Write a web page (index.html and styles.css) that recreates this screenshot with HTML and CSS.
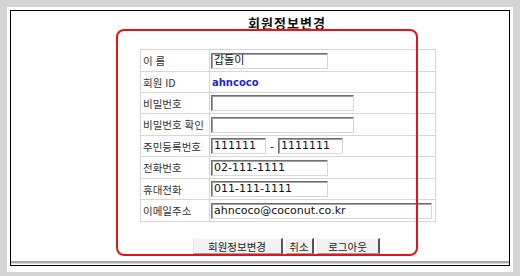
FILE: index.html
```html
<!DOCTYPE html>
<html lang="ko">
<head>
<meta charset="utf-8">
<title>회원정보변경</title>
<link rel="stylesheet" href="styles.css">
</head>
<body>
<div class="sheet">
  <div class="panel">
    <div class="content">
      <h1 class="title">회원정보변경</h1>
      <div class="form-grid">
        <div class="label">이 름</div>
        <div class="value"><span class="field w-name">갑돌이</span></div>
        <div class="label">회원 ID</div>
        <div class="value"><span class="userid">ahncoco</span></div>
        <div class="label">비밀번호</div>
        <div class="value"><span class="field w-pass"></span></div>
        <div class="label">비밀번호 확인</div>
        <div class="value"><span class="field w-pass"></span></div>
        <div class="label">주민등록번호</div>
        <div class="value"><span class="field w-jumin1">111111</span><span class="dash">-</span><span class="field w-jumin2">1111111</span></div>
        <div class="label">전화번호</div>
        <div class="value"><span class="field w-name">02-111-1111</span></div>
        <div class="label">휴대전화</div>
        <div class="value"><span class="field w-name">011-111-1111</span></div>
        <div class="label">이메일주소</div>
        <div class="value"><span class="field w-mail">ahncoco@coconut.co.kr</span></div>
      </div>
      <div class="actions">
        <span class="btn w-b1">회원정보변경</span>
        <span class="btn w-b2">취소</span>
        <span class="btn w-b3">로그아웃</span>
      </div>
    </div>
    <div class="rule"></div>
    <div class="highlight"></div>
  </div>
</div>
</body>
</html>
```
FILE: styles.css
```css
html, body {
  margin: 0;
  padding: 0;
}
body {
  background: #d4d4d4;
  width: 520px;
  height: 276px;
  overflow: hidden;
  font-family: "Noto Sans CJK KR", "DejaVu Sans", sans-serif;
}
.sheet {
  box-sizing: border-box;
  margin: 7px 0 0 7px;
  width: 506px;
  height: 265px;
  padding: 3px 3px 6px 3px;
  background: #ffffff;
}
.panel {
  position: relative;
  box-sizing: border-box;
  width: 500px;
  height: 256px;
  border: 1px solid #000;
  background: #fff;
  display: flex;
  flex-direction: column;
}
.content {
  flex: 1;
  margin-left: 129px;
  width: 296px;
  padding-top: 4px;
  display: flex;
  flex-direction: column;
}
.title {
  margin: 0;
  font-size: 13px;
  line-height: 16px;
  font-weight: bold;
  letter-spacing: 1px;
  color: #111;
  text-align: center;
  padding-right: 2px;
}
.form-grid {
  margin-top: 18px;
  display: grid;
  grid-template-columns: 68px 225px;
  grid-template-rows: 21px 20px 20px 21px 20px 21px 20px 21px;
  gap: 1px;
  background: #d6d6d6;
  border: 1px solid #d6d6d6;
}
.label, .value {
  background: #fff;
  display: flex;
  align-items: center;
}
.label {
  padding-left: 2px;
  font-size: 10.5px;
  color: #333;
  white-space: nowrap;
}
.value {
  padding-left: 1px;
}
.field {
  box-sizing: border-box;
  display: inline-block;
  height: 16px;
  padding: 0 1px 0 2px;
  border: 1px solid;
  border-color: #707070 #d8d8d8 #d8d8d8 #707070;
  box-shadow: inset 1px 1px 0 #a0a0a0;
  font-family: "DejaVu Sans", "Noto Sans CJK KR", sans-serif;
  font-size: 11px;
  line-height: 14px;
  color: #111;
  white-space: nowrap;
  overflow: hidden;
}
.w-name { width: 117px; }
.w-pass { width: 143px; }
.w-jumin1 { width: 55px; }
.w-jumin2 { width: 65px; }
.w-mail { width: 221px; }
.dash {
  margin: 0 4px;
  font-family: "DejaVu Sans", sans-serif;
  font-size: 11px;
  color: #222;
}
.userid {
  padding-left: 1px;
  font-family: "DejaVu Sans", sans-serif;
  font-weight: bold;
  font-size: 10px;
  color: #1f1fe6;
}
.actions {
  margin-top: 16px;
  display: flex;
  justify-content: center;
  gap: 3px;
  padding-right: 4px;
}
.btn {
  box-sizing: border-box;
  display: flex;
  align-items: center;
  justify-content: center;
  height: 16px;
  background: #f2f2f2;
  border-style: solid;
  border-width: 1px 2px 1px 1px;
  border-color: #fafafa #555 #a0a0a0 #e6e6e6;
  font-size: 10.5px;
  color: #222;
}
.w-b1 { width: 90px; }
.w-b2 { width: 28px; }
.w-b3 { width: 63px; }
.rule {
  height: 2px;
  background: #a8a8a8;
  border-bottom: 1px solid #d8d8d8;
  margin-bottom: 1px;
}
.highlight {
  position: absolute;
  left: 105px;
  top: 18px;
  width: 302px;
  height: 227px;
  box-sizing: border-box;
  border: 2px solid #e5141c;
  border-radius: 8px;
  pointer-events: none;
}
```
